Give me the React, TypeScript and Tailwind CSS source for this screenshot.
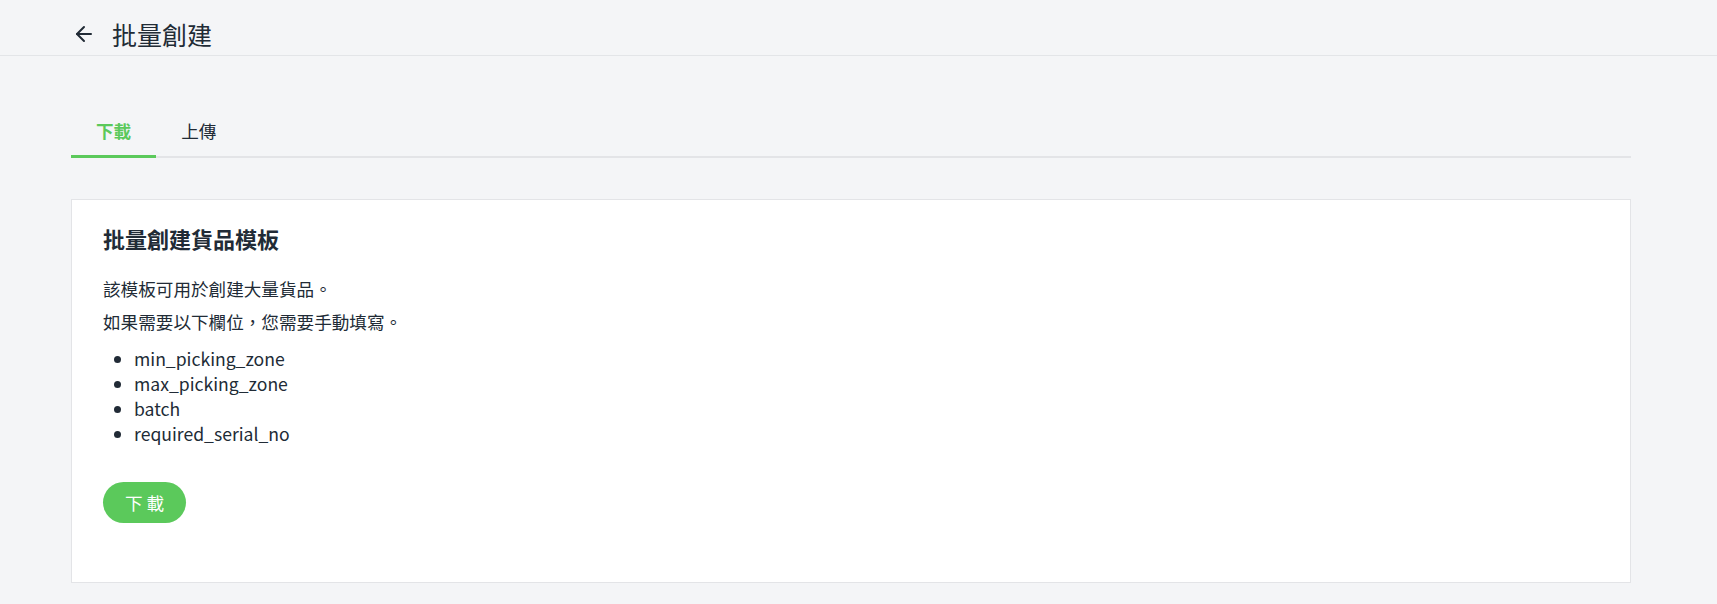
import React from "react";

const font = { fontFamily: '"Noto Sans CJK TC", "Noto Sans", sans-serif' };

export default function App() {
  return (
    <div
      className="min-h-[604px] w-full bg-[#f4f5f7] text-[#212b36] font-['Noto_Sans_CJK_TC',_'Noto_Sans',_sans-serif]"
      style={font}
    >
      <header className="flex h-[56px] items-center border-b border-[#e3e5e8] pl-[72px] pt-[12px]">
        <svg
          width="24"
          height="24"
          viewBox="0 0 24 24"
          fill="none"
          stroke="#212b36"
          strokeWidth="2"
          strokeLinecap="round"
          strokeLinejoin="round"
        >
          <path d="M12 19l-7-7 7-7" />
          <path d="M19 12H5" />
        </svg>
        <h1 className="ml-[16px] text-[25px] font-normal leading-[32px] text-[#212b36]">批量創建</h1>
      </header>

      <main className="ml-[71px] w-[1560px]">
        <div className="mt-[48px] flex border-b-2 border-[#e3e4e7]">
          <button className="-mb-[2px] border-b-[3px] border-[#5bc95b] px-[25px] pb-[11px] pt-[14px] text-[17.6px] font-bold leading-[26px] text-[#5bc95b]">
            下載
          </button>
          <button className="px-[25px] pb-[12px] pt-[14px] text-[17.6px] font-normal leading-[26px] text-[#212b36]">
            上傳
          </button>
        </div>

        <section className="mt-[41px] h-[384px] border border-[#e3e4e7] bg-white pl-[31px] pt-[23px]">
          <h2 className="text-[22px] font-bold leading-[30px] text-[#212b36]">批量創建貨品模板</h2>
          <p className="mt-[23px] text-[17.6px] leading-[26px]">該模板可用於創建大量貨品。</p>
          <p className="mt-[7px] text-[17.6px] leading-[26px]">如果需要以下欄位，您需要手動填寫。</p>
          <ul className="mt-[11px] list-disc pl-[31px] text-[17.6px] leading-[25px]">
            <li>min_picking_zone</li>
            <li>max_picking_zone</li>
            <li>batch</li>
            <li>required_serial_no</li>
          </ul>
          <button className="mt-[36px] h-[41px] w-[83px] rounded-full bg-[#5bc95b] text-[17.6px] font-normal leading-[41px] text-white">
            下 載
          </button>
        </section>
      </main>
    </div>
  );
}
